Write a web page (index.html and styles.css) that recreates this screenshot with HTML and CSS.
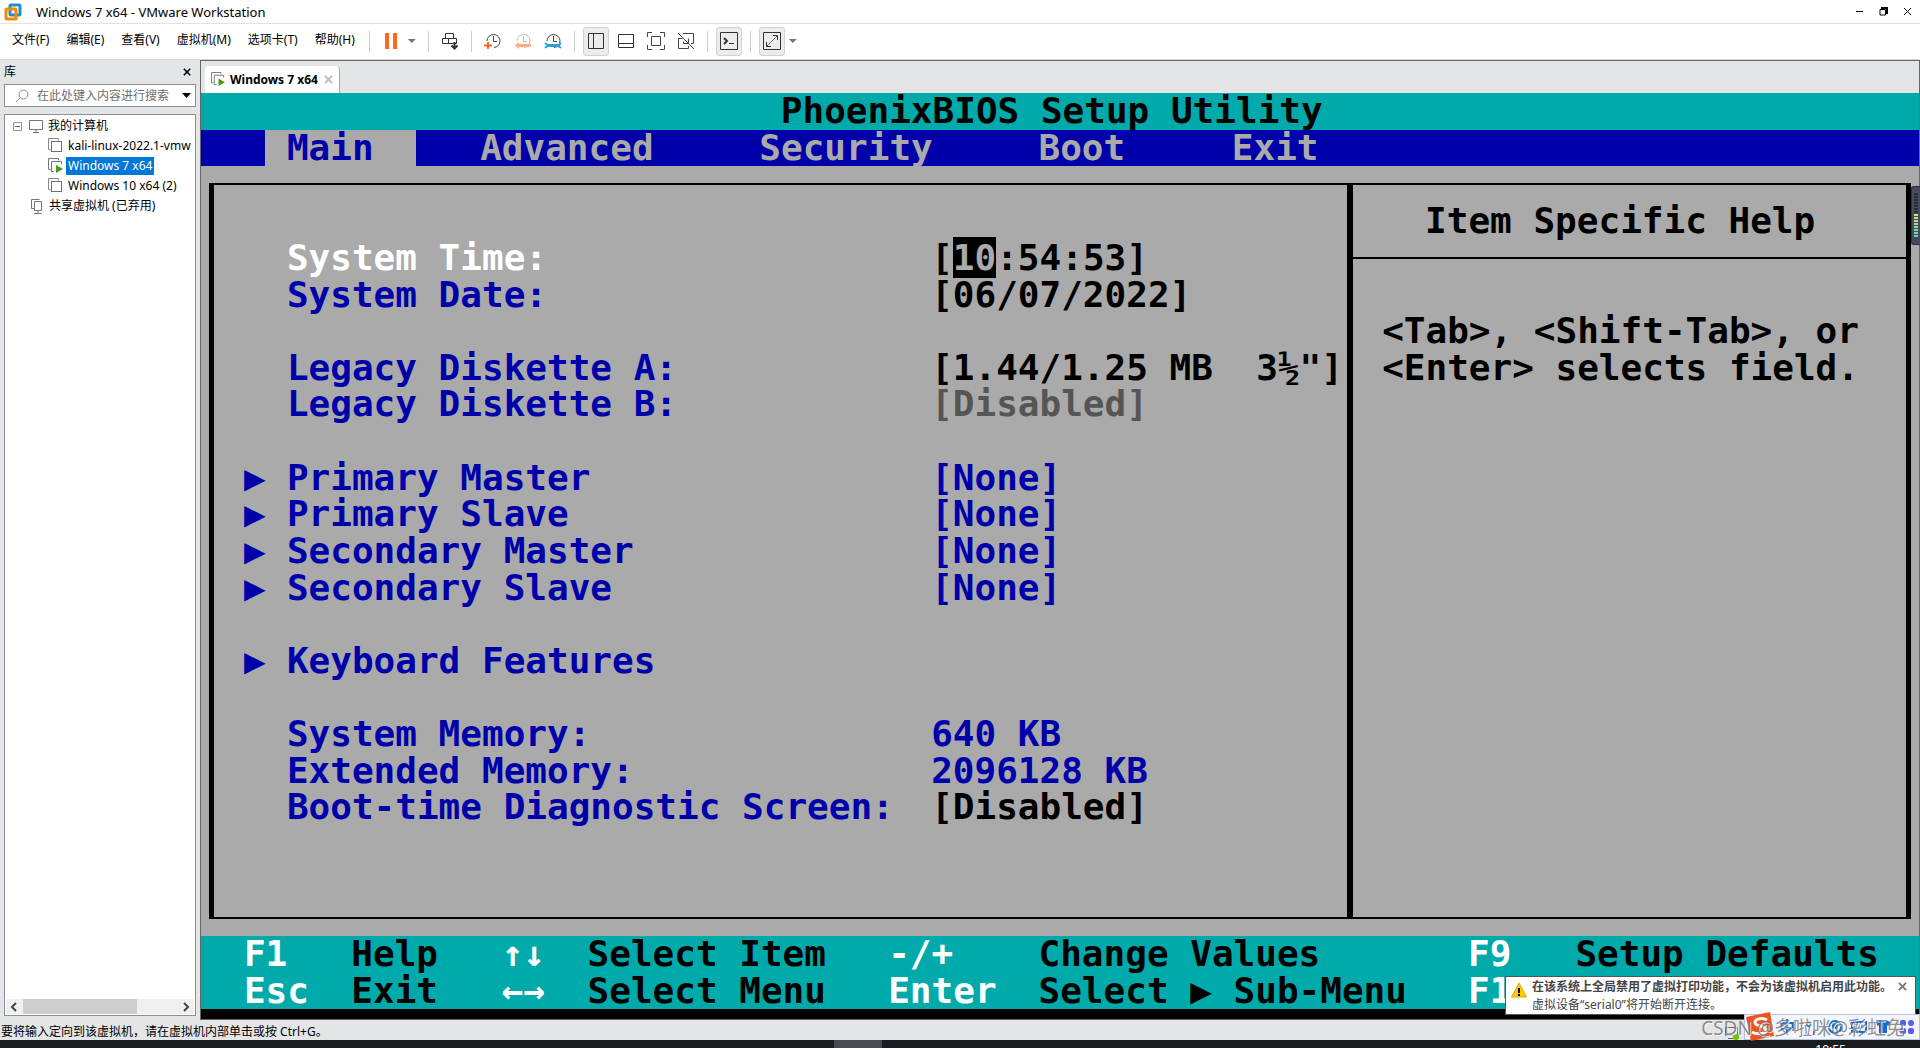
FILE: index.html
```html
<!DOCTYPE html>
<html lang="zh-CN">
<head>
<meta charset="utf-8">
<title>Windows 7 x64 - VMware Workstation</title>
<link rel="stylesheet" href="styles.css">
</head>
<body>
<svg class="defs" aria-hidden="true">
  <symbol id="vm" viewBox="0 0 16 16"><path d="M10.500 2.500V.5H.5v11h2" fill="none" stroke="#8a8a8a"/><rect x="3.500" y="3.500" width="10" height="10" fill="none" stroke="#6f6f6f"/></symbol>
  <symbol id="vm-on" viewBox="0 0 16 16"><path d="M10.500 2.500V.5H.5v11h2M6 13.500H3.500V3.500h10V6" fill="none" stroke="#777"/><path d="M8 7l7 4-7 4z" fill="#4a9a12"/></symbol>
  <symbol id="clock" viewBox="0 0 20 20"><path d="M4 10a6.500 6.500 0 1 1 7 6.500M10.500 5v5.500H14" fill="none" stroke="currentColor"/></symbol>
</svg>
<div class="app">
  <header class="titlebar">
    <svg class="logo" viewBox="0 0 18 18"><rect x="6" y="2" width="10" height="10" rx="1" fill="none" stroke="#1d91d0" stroke-width="3"/><rect x="2" y="6" width="10" height="10" rx="1" fill="none" stroke="#f38b00" stroke-width="3"/><path d="M6 8v4h4" fill="none" stroke="#1d91d0" stroke-width="2"/></svg>
    <h1>Windows 7 x64 - VMware Workstation</h1>
    <div class="window-buttons">
      <button aria-label="最小化"><svg viewBox="0 0 9 9"><path d="M1 4.500h7" stroke="#000"/></svg></button>
      <button aria-label="还原"><svg viewBox="0 0 9 9"><path d="M1 2.500h5.500v5.500H1z" fill="none" stroke="#000"/><path d="M2 1h6v6" fill="none" stroke="#000" stroke-width="2"/></svg></button>
      <button aria-label="关闭"><svg viewBox="0 0 9 9"><path d="M1 1l7 7M8 1L1 8" stroke="#000"/></svg></button>
    </div>
  </header>

  <div class="menubar">
    <nav class="menus">
      <button>文件(F)</button><button>编辑(E)</button><button>查看(V)</button><button>虚拟机(M)</button><button>选项卡(T)</button><button>帮助(H)</button>
    </nav>
    <div class="tools">
      <i class="sep"></i>
      <button class="tool" aria-label="暂停"><svg viewBox="0 0 20 20"><path d="M4 2h4v16H4zM12 2h4v16h-4z" fill="#ff671b"/></svg></button>
      <button class="caret" aria-label="电源选项"></button>
      <i class="sep"></i>
      <button class="tool" aria-label="发送 Ctrl+Alt+Del"><svg viewBox="0 0 20 20" fill="none" stroke="#333"><path d="M5.500 7.500v-5h8v5M2.500 7.500h6v5h-6zM8.500 7.500h8v5h-8z"/><path d="M14.500 11v6M11.500 14.500l3 3 3-3" stroke-width="2"/></svg></button>
      <i class="sep"></i>
      <button class="tool snap" aria-label="拍摄快照"><svg viewBox="0 0 20 20"><use href="#clock"/><path d="M5 11v7M1 14.500h8" stroke="#ff671b" stroke-width="2"/></svg></button>
      <button class="tool snap off" aria-label="恢复快照"><svg viewBox="0 0 20 20"><use href="#clock"/><path d="M3 14.500h15" stroke="#ffab85" stroke-width="3"/><path d="M6 11v7l-4-3.500z" fill="#ffab85"/></svg></button>
      <button class="tool snap" aria-label="管理快照"><svg viewBox="0 0 20 20"><use href="#clock"/><path d="M4 14.500h13" stroke="#2a9ce0" stroke-width="3"/><path d="M2 12l3 2.500L2 17M18 12l-3 2.500 3 2.500" fill="none" stroke="#2a9ce0" stroke-width="2"/></svg></button>
      <i class="sep"></i>
      <button class="tool on" aria-label="显示库"><svg viewBox="0 0 20 20" fill="none" stroke="#333"><path d="M2.500 2.500h15v15h-15zM7.500 2.500v15"/></svg></button>
      <button class="tool" aria-label="缩略图栏"><svg viewBox="0 0 20 20" fill="none" stroke="#333"><path d="M2.500 3.500h15v13h-15zM2.500 12.500h15"/></svg></button>
      <button class="tool" aria-label="全屏"><svg viewBox="0 0 20 20" fill="none" stroke="#444"><path d="M1.500 6V1.500H6M14 1.500h4.500V6M18.500 14v4.500H14M6 18.500H1.500V14M5.500 5.500h9v9h-9z"/></svg></button>
      <button class="tool" aria-label="Unity"><svg viewBox="0 0 20 20" fill="none" stroke="#445"><path d="M7 2.500h10.500v10H15M2.500 7v10.500h10V15M2.500 7.500h4M12.500 7.500v5h-5v-2M2 2l16 16"/></svg></button>
      <i class="sep"></i>
      <button class="tool on" aria-label="控制台"><svg viewBox="0 0 20 20" fill="none" stroke="#333"><path d="M1.500 1.500h17v17h-17zM10 12.500h5"/><path d="M5 7l3 3-3 3" stroke-width="2"/></svg></button>
      <i class="sep"></i>
      <button class="tool on" aria-label="拉伸"><svg viewBox="0 0 20 20" fill="none" stroke="#333"><path d="M1.500 1.500h17v17h-17zM11 4.500h4.500V9M4.500 11v4.500H9"/><path d="M5 15L15 5" stroke-dasharray="2 1"/></svg></button>
      <button class="caret" aria-label="拉伸选项"></button>
    </div>
  </div>

  <div class="work">
    <aside class="library">
      <div class="library-head"><h2>库</h2><button aria-label="关闭库"><svg viewBox="0 0 10 10"><path d="M1 1l8 8M9 1L1 9" stroke="#000" stroke-width="2"/></svg></button></div>
      <label class="search"><svg viewBox="0 0 14 14"><path d="M5 9L1 13" stroke="#888"/><circle cx="8.500" cy="5.500" r="4.500" fill="none" stroke="#888"/></svg><input type="text" placeholder="在此处键入内容进行搜索" aria-label="搜索"><b class="drop"></b></label>
      <div class="tree-box">
        <ul class="tree">
          <li><svg class="toggle" viewBox="0 0 9 9"><path d="M.5.5h8v8h-8z" fill="#fff" stroke="#919191"/><path d="M2 4.500h5" stroke="#3c58a8"/></svg><svg viewBox="0 0 16 16"><path d="M1.500 2.500h13v9h-13zM5 14.500h6M8 12v2" fill="none" stroke="#777"/></svg><span>我的计算机</span></li>
          <li class="child"><svg viewBox="0 0 16 16"><use href="#vm"/></svg><span>kali-linux-2022.1-vmw</span></li>
          <li class="child current"><svg viewBox="0 0 16 16"><use href="#vm-on"/></svg><span>Windows 7 x64</span></li>
          <li class="child"><svg viewBox="0 0 16 16"><use href="#vm"/></svg><span>Windows 10 x64 (2)</span></li>
          <li class="shared"><svg viewBox="0 0 16 16"><path d="M5 10.500H2.500V1.500h8M5.500 3.500h7v9h-7zM9 13v2M5 15.500h8" fill="none" stroke="#777"/></svg><span>共享虚拟机 (已弃用)</span></li>
        </ul>
        <div class="scroll"><svg viewBox="0 0 8 10"><path d="M6 1L2 5l4 4" fill="none" stroke="#444" stroke-width="2"/></svg><i><b></b></i><svg viewBox="0 0 8 10"><path d="M2 1l4 4-4 4" fill="none" stroke="#444" stroke-width="2"/></svg></div>
      </div>
    </aside>

    <main class="console">
      <div class="tabs"><div class="tab"><svg viewBox="0 0 16 16"><use href="#vm-on"/></svg><span>Windows 7 x64</span><button aria-label="关闭标签"><svg viewBox="0 0 10 10"><path d="M1 1l8 8M9 1L1 9" stroke="#bbb" stroke-width="2"/></svg></button></div></div>
      <div class="bios">
        <div class="line head"><h3 class="c27">PhoenixBIOS Setup Utility</h3></div>
        <nav class="line bios-menu"><i></i><a class="c4 active" href="#main">Main</a><a class="c13" href="#advanced">Advanced</a><a class="c26" href="#security">Security</a><a class="c39" href="#boot">Boot</a><a class="c48" href="#exit">Exit</a></nav>
        <section class="body" id="main">
          <div class="frame"></div>
          <div class="divider"></div>
          <div class="help-rule"></div>
          <div class="line r4 white"><span class="c4">System Time:</span><span class="c34 black">[<mark>10</mark>:54:53]</span></div>
          <div class="line r5"><span class="c4">System Date:</span><span class="c34 black">[06/07/2022]</span></div>
          <div class="line r7"><span class="c4">Legacy Diskette A:</span><span class="c34 black">[1.44/1.25 MB  3½"]</span></div>
          <div class="line r8"><span class="c4">Legacy Diskette B:</span><span class="c34 dim">[Disabled]</span></div>
          <div class="line r10"><span class="c2">▶</span><span class="c4">Primary Master</span><span class="c34">[None]</span></div>
          <div class="line r11"><span class="c2">▶</span><span class="c4">Primary Slave</span><span class="c34">[None]</span></div>
          <div class="line r12"><span class="c2">▶</span><span class="c4">Secondary Master</span><span class="c34">[None]</span></div>
          <div class="line r13"><span class="c2">▶</span><span class="c4">Secondary Slave</span><span class="c34">[None]</span></div>
          <div class="line r15"><span class="c2">▶</span><span class="c4">Keyboard Features</span></div>
          <div class="line r17"><span class="c4">System Memory:</span><span class="c34">640 KB</span></div>
          <div class="line r18"><span class="c4">Extended Memory:</span><span class="c34">2096128 KB</span></div>
          <div class="line r19"><span class="c4">Boot-time Diagnostic Screen:</span><span class="c34 black">[Disabled]</span></div>
          <div class="line r3 black"><span class="c57">Item Specific Help</span></div>
          <div class="line r6 black"><span class="c55">&lt;Tab&gt;, &lt;Shift-Tab&gt;, or</span></div>
          <div class="line r7 black"><span class="c55">&lt;Enter&gt; selects field.</span></div>
        </section>
        <footer class="keys">
          <div class="line"><b class="c2">F1</b><span class="c7">Help</span><b class="c14">↑↓</b><span class="c18">Select Item</span><b class="c32">-/+</b><span class="c39">Change Values</span><b class="c59">F9</b><span class="c64">Setup Defaults</span></div>
          <div class="line"><b class="c2">Esc</b><span class="c7">Exit</span><b class="c14">←→</b><span class="c18">Select Menu</span><b class="c32">Enter</b><span class="c39">Select ▶ Sub-Menu</span><b class="c59">F1</b></div>
        </footer>
      </div>
    </main>
  </div>
  <div class="status"><span>要将输入定向到该虚拟机，请在虚拟机内部单击或按 Ctrl+G。</span><svg viewBox="0 0 16 16"><path d="M1.500 3.500h12v8h-12zM4 14.500h6" fill="none" stroke="#666"/><circle cx="12" cy="13" r="3" fill="#6fc400"/></svg></div>
  <div class="taskbar"><i></i><span>10:55</span></div>

  <div class="notice" role="alert">
    <svg class="warn" viewBox="0 0 16 16"><path d="M8 1l7.500 14H.5z" fill="#fc0" stroke="#e0a800"/><path d="M8 6v5M8 12v2" stroke="#000" stroke-width="2"/></svg>
    <p><strong>在该系统上全局禁用了虚拟打印功能，不会为该虚拟机启用此功能。</strong><br>虚拟设备“serial0”将开始断开连接。</p>
    <button aria-label="关闭通知"><svg viewBox="0 0 10 10"><path d="M1 1l8 8M9 1L1 9" stroke="#777" stroke-width="2"/></svg></button>
  </div>
  <div class="ime">
    <svg class="sogou" viewBox="0 0 30 30"><path d="M1 5L25 0l4 24L6 29z" fill="#f4511e"/><path d="M22 8c-5-3-13-1-12 3 1 4 11 2 11 7 0 4-9 5-14 2" fill="none" stroke="#fff" stroke-width="3"/></svg>
    <span>中</span><span>°,</span>
    <svg viewBox="0 0 16 16"><circle cx="8" cy="8" r="6" fill="none" stroke="#0a6fdc" stroke-width="2"/><circle cx="8" cy="7" r="3" fill="#0a6fdc"/></svg>
    <svg viewBox="0 0 16 16"><path d="M1 3h14v10H1z" fill="none" stroke="#0a6fdc" stroke-width="2"/><path d="M4 6h8M4 8h8M5 11h6" stroke="#0a6fdc" stroke-dasharray="2 1"/></svg>
    <svg viewBox="0 0 16 16"><path d="M1 3l4-2q3 2 6 0l4 2-1 4-2-1v8H4V6L2 7z" fill="#0a6fdc"/></svg>
    <svg viewBox="0 0 16 16" fill="#5b5be8"><rect x="1" y="1" width="6" height="6" rx="2"/><rect x="9" y="1" width="6" height="6" rx="3"/><rect x="1" y="9" width="6" height="6" rx="2"/><rect x="9" y="9" width="6" height="6" rx="2"/></svg>
  </div>
  <div class="watermark">CSDN @多啦咪@彩虹兔</div>
  <div class="meter"><i></i></div>
</div>
</body>
</html>
```
FILE: styles.css
```css
* { box-sizing: border-box; }
body { margin: 0; font: 12px/16px "Noto Sans", "Noto Sans CJK SC", sans-serif; color: #000; }
button { border: 0; padding: 0; background: none; font: inherit; color: inherit; display: flex; align-items: center; justify-content: center; }
h1, h2, h3, p, ul { margin: 0; padding: 0; font: inherit; }
svg { display: block; flex: none; }
i, b { font-style: normal; }
.defs { display: none; }
.app { position: relative; display: flex; flex-direction: column; height: 100vh; overflow: hidden; background: #e4e5e7; }

.titlebar { display: flex; align-items: center; height: 24px; padding: 0 8px 0 4px; gap: 14px; background: #fff; border-bottom: 1px solid #e2e2e2; flex: none; }
.titlebar h1 { flex: 1; font-size: 13px; }
.logo { width: 18px; height: 18px; }
.window-buttons { display: flex; gap: 15px; }
.window-buttons svg { width: 9px; height: 9px; }

.menubar { display: flex; align-items: center; height: 36px; padding: 0 12px 1px; background: #fff; border-bottom: 1px solid #d9d9d9; flex: none; }
.menus { display: flex; gap: 17px; padding-bottom: 2px; }
.tools { display: flex; align-items: center; margin-left: 6px; }
.sep { width: 1px; height: 21px; margin: 0 8px; background: #ccc; }
.tool { width: 26px; height: 29px; margin-right: 4px; border: 1px solid transparent; border-radius: 3px; }
.tool svg { width: 20px; height: 20px; }
.tool.on { background: #ececec; border-color: #d2d2d2; }
.tool + .sep { margin-left: 4px; }
.snap { color: #444; }
.snap.off { color: #bbb; }
.caret { width: 8px; height: 4px; margin-right: 4px; background: #777; clip-path: polygon(0 0, 100% 0, 50% 100%); }

.work { display: flex; flex: 1; min-height: 0; }
.library { display: flex; flex-direction: column; width: 200px; padding: 0 4px 4px; flex: none; }
.library-head { display: flex; align-items: center; justify-content: space-between; height: 24px; padding: 0 5px 0 0; }
.library-head svg { width: 8px; height: 8px; }
.search { display: flex; align-items: center; height: 23px; padding: 0 4px 0 10px; gap: 8px; background: #fff; border: 1px solid #8b8f97; }
.search svg { width: 14px; height: 14px; }
.search input { flex: 1; min-width: 0; border: 0; padding: 0; outline: 0; font: inherit; background: none; }
.search input::placeholder { color: #6d6d6d; opacity: 1; }
.drop { width: 9px; height: 5px; background: #000; clip-path: polygon(0 0, 100% 0, 50% 100%); }
.tree-box { display: flex; flex-direction: column; flex: 1; margin-top: 7px; padding: 1px; background: #fff; border: 1px solid #8b8f97; overflow: hidden; }
.tree { flex: 1; list-style: none; }
.tree li { display: flex; align-items: center; height: 20px; padding-left: 7px; gap: 2px; white-space: nowrap; }
.tree li.child { padding-left: 42px; }
.tree li.shared { padding-left: 23px; }
.tree svg { width: 16px; height: 16px; }
.tree .toggle { width: 9px; height: 9px; margin-right: 4px; }
.tree span { padding: 1px 2px; }
.current span { background: #0078d7; color: #fff; }
.scroll { display: flex; align-items: center; height: 15px; background: #f0f0f0; padding: 0 4px; gap: 5px; flex: none; }
.scroll svg { width: 8px; height: 10px; }
.scroll i { flex: 1; height: 15px; }
.scroll b { display: block; width: 74%; height: 15px; background: #cdcdcd; }

.console { display: flex; flex-direction: column; flex: 1; min-width: 0; border: 1px solid #666; }
.tabs { display: flex; align-items: flex-end; height: 32px; padding-left: 4px; flex: none; background: #e4e5e7; }
.tab { display: flex; align-items: center; height: 27px; padding: 0 6px; gap: 4px; background: #fff; border-right: 1px solid #aaa; border-radius: 4px 4px 0 0; font-weight: 700; }
.tab > svg { width: 15px; height: 15px; }
.tab button { margin-left: 2px; }
.tab button svg { width: 9px; height: 9px; }

.bios { display: grid; grid-template-rows: repeat(25, minmax(0, 1fr)); flex: 1; min-height: 0; border-bottom: 10px solid #000; background: #aaa; font: 700 36px/36px "DejaVu Sans Mono", monospace; color: #0000aa; }
.line { display: grid; grid-template-columns: repeat(80, minmax(0, 1fr)); align-items: center; justify-items: start; white-space: pre; min-height: 0; }
.line > * { grid-row: 1; font-weight: 700; }
.head { background: #0aa; color: #000; }
.bios-menu { background: #00a; color: #aaa; }
.bios-menu i { grid-column: 4 / 11; width: 100%; height: 100%; background: #aaa; }
.bios-menu a { color: inherit; text-decoration: none; }
.bios-menu a.active { color: #00a; }
.body { grid-row: 3 / 24; display: grid; grid-template: repeat(21, minmax(0, 1fr)) / repeat(80, minmax(0, 1fr)); }
.body .line { grid-column: 1 / -1; }
.frame { grid-area: 1 / 1 / -1 / -1; margin: 17px 8px; border: solid #000; border-width: 2px 5px; }
.divider { grid-area: 1 / 54 / -1 / 55; margin: 17px 8px; background: #000; }
.help-rule { grid-area: 3 / 54 / 4 / -1; align-self: center; height: 2px; margin: 0 9px; background: #000; }
.keys { grid-row: 24 / 26; display: grid; grid-template-rows: 1fr 1fr; background: #0aa; color: #000; }
.keys b, .white { color: #fff; }
.black { color: #000; }
.dim { color: #555; }
mark { background: #000; color: #aaa; }
.c2 { grid-column: 3; } .c4 { grid-column: 5; } .c7 { grid-column: 8; }
.c13 { grid-column: 14; } .c14 { grid-column: 15; } .c18 { grid-column: 19; }
.c26 { grid-column: 27; } .c27 { grid-column: 28; } .c32 { grid-column: 33; }
.c34 { grid-column: 35; } .c39 { grid-column: 40; } .c48 { grid-column: 49; }
.c55 { grid-column: 56; } .c57 { grid-column: 58; } .c59 { grid-column: 60; } .c64 { grid-column: 65; }
.r3 { grid-row: 2; } .r4 { grid-row: 3; } .r5 { grid-row: 4; } .r6 { grid-row: 5; }
.r7 { grid-row: 6; } .r8 { grid-row: 7; } .r10 { grid-row: 9; } .r11 { grid-row: 10; }
.r12 { grid-row: 11; } .r13 { grid-row: 12; } .r15 { grid-row: 14; } .r17 { grid-row: 16; }
.r18 { grid-row: 17; } .r19 { grid-row: 18; }

.status { display: flex; justify-content: space-between; height: 20px; padding: 4px 180px 0 1px; flex: none; }
.status svg { width: 16px; height: 16px; }
.taskbar { display: flex; justify-content: space-between; height: 8px; padding-right: 74px; background: #1c1d21; overflow: hidden; flex: none; color: #fff; }
.taskbar i { width: 48px; height: 8px; margin-left: 834px; background: #4a4b50; }
.taskbar span { padding-top: 2px; }

.notice { position: absolute; right: 4px; bottom: 33px; display: flex; width: 411px; height: 39px; padding: 1px 8px 0 5px; gap: 5px; background: #fff; border: 1px solid #555; color: #444; white-space: nowrap; }
.notice p { flex: 1; line-height: 18px; }
.notice .warn { width: 16px; height: 16px; margin-top: 4px; }
.notice button { align-self: flex-start; margin-top: 4px; }
.notice button svg { width: 9px; height: 9px; }
.ime { position: absolute; right: 0; bottom: 8px; display: flex; align-items: center; height: 26px; background: #f4f6fc; border: 1px solid #b5c3e6; color: #0a6fdc; font-weight: 700; font-size: 16px; }
.ime > * { width: 24px; text-align: center; }
.ime svg { height: 16px; }
.ime .sogou { width: 30px; height: 30px; }
.watermark { position: absolute; right: 15px; bottom: 8px; color: #777; opacity: .8; font-size: 19px; line-height: 24px; white-space: nowrap; text-shadow: 1px 1px #fff; }
.meter { position: absolute; right: 0; top: 186px; width: 9px; height: 59px; padding: 6px 2px 6px 2px; background: #464a5a; border-radius: 3px 0 0 3px; border: 1px solid #2c2e38; border-right: 0; }
.meter i { display: block; height: 45px; background: repeating-linear-gradient(#464a5a00 0 2px, #464a5a 2px 3px), linear-gradient(#2a2c36 0 20px, #dfe06a 20px, #55d6c8); }
```
